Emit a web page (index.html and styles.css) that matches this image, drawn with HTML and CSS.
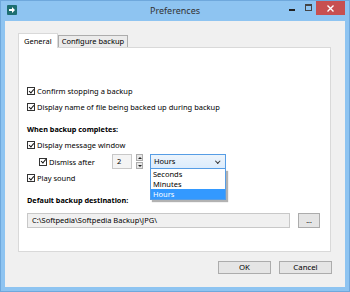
FILE: index.html
```html
<!DOCTYPE html>
<html lang="en">
<head>
  <meta charset="UTF-8">
  <title>Preferences</title>
  <link rel="stylesheet" href="styles.css">
</head>
<body>

<div class="window">
  <div class="titlebar">
    <div class="app-icon">
      <svg width="10" height="10" viewBox="0 0 10 10">
        <rect x="0" y="0" width="10" height="10" rx="1" fill="#1d6e70"/>
        <path d="M2 4h3V2l3 3-3 3V6H2z" fill="#fff"/>
      </svg>
    </div>
    <div class="title">Preferences</div>
    <div class="controls">
      <span class="ctl min"></span>
      <span class="ctl max"></span>
      <span class="ctl close">
        <svg width="7" height="7" viewBox="0 0 7 7">
          <path d="M0.5 0.5l6 6M6.5 0.5l-6 6" stroke="#fff" stroke-width="1.4"/>
        </svg>
      </span>
    </div>
  </div>

  <div class="client">
    <div class="tabs">
      <div class="tab active">General</div>
      <div class="tab">Configure backup</div>
    </div>

    <div class="panel">
      <div class="row"><span class="cb"></span>Confirm stopping a backup</div>
      <div class="row"><span class="cb"></span>Display name of file being backed up during backup</div>

      <div class="row heading">When backup completes:</div>
      <div class="row"><span class="cb"></span>Display message window</div>
      <div class="row indent">
        <span class="cb"></span><span class="dismiss-label">Dismiss after</span>
        <span class="num">2</span>
        <span class="spin"><span class="up"></span><span class="down"></span></span>
        <div class="combo">
          <div class="combo-box">Hours<span class="chev"></span></div>
          <div class="combo-list">
            <div class="opt">Seconds</div>
            <div class="opt">Minutes</div>
            <div class="opt sel">Hours</div>
          </div>
        </div>
      </div>
      <div class="row"><span class="cb"></span>Play sound</div>

      <div class="row heading">Default backup destination:</div>
      <div class="path-row">
        <div class="path">C:\Softpedia\Softpedia Backup\JPG\</div>
        <button class="browse">...</button>
      </div>
    </div>

    <div class="buttons">
      <button class="btn">OK</button>
      <button class="btn">Cancel</button>
    </div>
  </div>
</div>

</body>
</html>
```

FILE: styles.css
```css
body {
  margin: 0;
  font-family: 'Noto Sans', sans-serif;
  font-size: 7.5px;
  color: #000;
  overflow: hidden;
}

.window {
  width: 350px;
  height: 292px;
  box-sizing: border-box;
  background: #8ec4f1;
  border: 1px solid #6fa8dc;
  display: flex;
  flex-direction: column;
}

.titlebar {
  height: 20px;
  flex-shrink: 0;
  display: grid;
  grid-template-columns: 1fr auto 1fr;
  align-items: start;
}

.app-icon {
  padding: 4px 0 0 6px;
  line-height: 0;
}

.title {
  font-size: 9px;
  line-height: 12px;
  color: #333;
  padding-top: 4px;
}

.controls {
  display: flex;
  justify-content: flex-end;
  align-items: flex-start;
  padding-right: 4px;
}

.ctl {
  display: block;
}

.ctl.min {
  width: 6px;
  height: 2px;
  background: #222;
  margin: 8px 10px 0 0;
}

.ctl.max {
  width: 5px;
  height: 4px;
  border: 1px solid #444;
  border-top-width: 2px;
  margin: 3px 4px 0 0;
}

.ctl.close {
  width: 29px;
  height: 14px;
  background: #c75050;
  display: flex;
  align-items: center;
  justify-content: center;
}

.client {
  height: 266px;
  flex-shrink: 0;
  box-sizing: border-box;
  margin: 0 4px;
  background: #f0f0f0;
  padding: 12px 14px 0 13px;
  display: flex;
  flex-direction: column;
}

.tabs {
  display: flex;
  align-items: flex-end;
  height: 14px;
  flex-shrink: 0;
}

.tab {
  height: 12px;
  box-sizing: border-box;
  line-height: 11px;
  padding: 0 3px;
  background: #ebebeb;
  border: 1px solid #acacac;
  border-bottom: none;
}

.tab.active {
  height: 15px;
  line-height: 15px;
  padding: 0 5px;
  background: #fff;
  border-color: #d9d9d9;
  position: relative;
  top: 1px;
  z-index: 1;
}

.panel {
  height: 205px;
  flex-shrink: 0;
  box-sizing: border-box;
  background: #fff;
  border: 1px solid #d9d9d9;
  padding: 35px 8px 0;
  display: flex;
  flex-direction: column;
}

.row {
  height: 16px;
  flex-shrink: 0;
  display: flex;
  align-items: center;
  white-space: nowrap;
}

.row.heading {
  font-weight: bold;
  font-size: 7.3px;
  margin-top: 6px;
}

.row.indent {
  height: 17px;
  padding-left: 12px;
}

.cb {
  width: 6px;
  height: 6px;
  border: 1px solid #333;
  background: #fff;
  margin-right: 2px;
  position: relative;
  flex-shrink: 0;
}

.cb::after {
  content: "";
  position: absolute;
  left: 1.5px;
  top: -0.5px;
  width: 1.5px;
  height: 4px;
  border: solid #111;
  border-width: 0 1.3px 1.3px 0;
  transform: rotate(40deg);
}

.dismiss-label {
  width: 63px;
}

.num {
  width: 20px;
  height: 15px;
  box-sizing: border-box;
  line-height: 13px;
  border: 1px solid #c8c8c8;
  background: #f4f4f4;
  padding-left: 4px;
}

.spin {
  width: 7px;
  height: 15px;
  margin-left: 4px;
  display: flex;
  flex-direction: column;
  justify-content: space-between;
}

.spin span {
  height: 7px;
  background: #e8e8e8;
  border: 1px solid #adadad;
  box-sizing: border-box;
  position: relative;
}

.spin span::after {
  content: "";
  position: absolute;
  left: 0.5px;
  top: 1.5px;
  border-left: 2px solid transparent;
  border-right: 2px solid transparent;
}

.spin .up::after {
  border-bottom: 2px solid #222;
}

.spin .down::after {
  border-top: 2px solid #222;
}

.combo {
  margin-left: 7px;
  position: relative;
}

.combo-box {
  width: 76px;
  height: 15px;
  box-sizing: border-box;
  line-height: 13px;
  border: 1px solid #569de5;
  background: linear-gradient(#ecf4fc, #dcecfc);
  padding-left: 3px;
  position: relative;
}

.chev {
  position: absolute;
  right: 6px;
  top: 4px;
  width: 2.5px;
  height: 2.5px;
  border: solid #333;
  border-width: 0 1px 1px 0;
  transform: rotate(45deg);
}

.combo-list {
  position: absolute;
  left: 0;
  top: 15px;
  width: 76px;
  box-sizing: border-box;
  background: #fff;
  border: 1px solid #569de5;
  border-top: none;
  box-shadow: 2px 2px 1px rgba(0, 0, 0, 0.3);
  z-index: 2;
}

.opt {
  height: 10px;
  line-height: 10px;
  padding-left: 2px;
}

.opt.sel {
  background: #3399ff;
  color: #fff;
}

.path-row {
  display: flex;
  align-items: center;
  margin-top: 5px;
}

.path {
  width: 263px;
  height: 15px;
  box-sizing: border-box;
  line-height: 13px;
  border: 1px solid #c8c8c8;
  background: #f0f0f0;
  padding-left: 4px;
}

.browse {
  margin-left: 8px;
  width: 22px;
  height: 15px;
  padding: 0;
  font-family: inherit;
  font-size: 7px;
  line-height: 9px;
  background: #e5e5e5;
  border: 1px solid #acacac;
}

.buttons {
  display: flex;
  justify-content: flex-end;
  gap: 8px;
  margin: 9px -1px 0 0;
}

.btn {
  width: 53px;
  height: 13px;
  padding: 0;
  font-family: inherit;
  font-size: 7.8px;
  line-height: 11px;
  background: #e5e5e5;
  border: 1px solid #acacac;
  color: #000;
}
```
